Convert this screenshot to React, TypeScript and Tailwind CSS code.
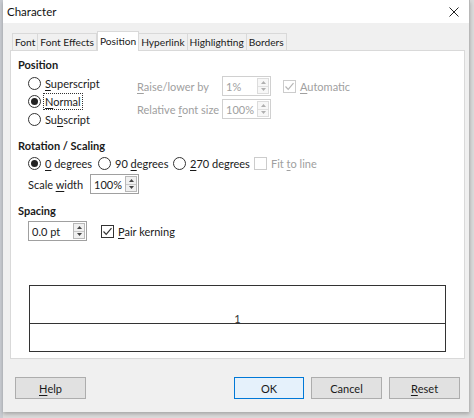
import type { ReactNode } from 'react';

const font = { fontFamily: 'Lato, "Noto Sans", sans-serif' };

function U({ children }: { children: ReactNode }) {
    return <span className="underline underline-offset-2">{children}</span>;
}

function Radio({ checked, children, focus }: { checked?: boolean; children: ReactNode; focus?: boolean }) {
    return (
        <div className="flex items-center gap-[3px] whitespace-nowrap">
            <span className="flex h-[13px] w-[13px] shrink-0 items-center justify-center rounded-full border border-[#333] bg-white">
                {checked && <span className="h-[7px] w-[7px] rounded-full bg-[#222]" />}
            </span>
            <span className={focus ? 'outline outline-1 outline-dotted outline-[#333] px-px' : 'px-px'}>{children}</span>
        </div>
    );
}

function Check({ checked, disabled, children }: { checked?: boolean; disabled?: boolean; children: ReactNode }) {
    const stroke = disabled ? '#b5b5b5' : '#333';
    return (
        <div className={`flex items-center gap-[3px] whitespace-nowrap ${disabled ? 'text-[#a0a0a0]' : ''}`}>
            <span className={`flex h-[13px] w-[13px] shrink-0 items-center justify-center border bg-white ${disabled ? 'border-[#cccccc]' : 'border-[#333]'}`}>
                {checked && (
                    <svg width="11" height="11" viewBox="0 0 11 11">
                        <path d="M1.5 5.5 L4.2 8.3 L9.5 2.2" fill="none" stroke={stroke} strokeWidth="1.2" />
                    </svg>
                )}
            </span>
            <span className="px-px">{children}</span>
        </div>
    );
}

function Spin({ value, width, disabled }: { value: string; width: string; disabled?: boolean }) {
    const arrow = disabled ? '#b0b0b0' : '#444';
    return (
        <div className={`flex h-[20px] ${width} shrink-0 border bg-white ${disabled ? 'border-[#d0d0d0] text-[#a0a0a0]' : 'border-[#a0a0a0]'}`}>
            <div className="flex flex-1 items-center pl-[3px] whitespace-nowrap">{value}</div>
            <div className={`m-px flex w-[12px] flex-col border ${disabled ? 'border-[#dcdcdc] bg-[#f7f7f7]' : 'border-[#b8b8b8] bg-[#f0f0f0]'}`}>
                <div className="flex flex-1 items-center justify-center">
                    <svg width="5" height="3" viewBox="0 0 5 3"><path d="M0 3 L2.5 0 L5 3 Z" fill={arrow} /></svg>
                </div>
                <div className={`h-px ${disabled ? 'bg-[#e0e0e0]' : 'bg-[#c8c8c8]'}`} />
                <div className="flex flex-1 items-center justify-center">
                    <svg width="5" height="3" viewBox="0 0 5 3"><path d="M0 0 L2.5 3 L5 0 Z" fill={arrow} /></svg>
                </div>
            </div>
        </div>
    );
}

function Tab({ label, active }: { label: string; active?: boolean }) {
    if (active) {
        return (
            <div className="relative z-10 -mb-px flex h-[20px] items-center border border-b-0 border-[#d9d9d9] bg-white px-[2px] whitespace-nowrap">
                {label}
            </div>
        );
    }
    return (
        <div className="mt-[2px] flex h-[17px] items-center border border-b-0 border-l-0 border-[#d9d9d9] bg-[#f0f0f0] px-[2px] whitespace-nowrap first:border-l">
            {label}
        </div>
    );
}

function Button({ children, primary, width = 'w-[71px]' }: { children: ReactNode; primary?: boolean; width?: string }) {
    return (
        <div
            className={`flex h-[22px] ${width} items-center justify-center border ${primary ? 'border-[#0078d7] bg-[#e5f1fb]' : 'border-[#adadad] bg-[#e1e1e1]'}`}
        >
            {children}
        </div>
    );
}

export default function App() {
    return (
        <div className="flex h-[418px] w-[474px] bg-[#dcdcdc] text-[11px] leading-[15px] text-[#1a1a1a]" style={font}>
            <div className="w-[3px] bg-[#c9ccd2]" />
            <div className="flex h-[412px] w-[467px] flex-col border-r border-[#b8b8b8] bg-[#f0f0f0] shadow-[0_2px_4px_rgba(0,0,0,0.25)]">
                {/* title bar */}
                <div className="flex h-[23px] items-center justify-between bg-white pl-[4px] pr-[10px] text-[11.5px] text-[#111]">
                    <span>Character</span>
                    <svg width="10" height="10" viewBox="0 0 10 10">
                        <path d="M0.5 0.5 L9.5 9.5 M9.5 0.5 L0.5 9.5" stroke="#222" strokeWidth="1" />
                    </svg>
                </div>

                {/* tabs */}
                <div className="mt-[8px] flex pl-[9px] text-[10.2px]">
                    <Tab label="Font" />
                    <Tab label="Font Effects" />
                    <Tab label="Position" active />
                    <Tab label="Hyperlink" />
                    <Tab label="Highlighting" />
                    <Tab label="Borders" />
                </div>

                {/* tab page */}
                <div className="ml-[7px] flex h-[309px] w-[455px] flex-col border border-[#d9d9d9] bg-white pl-[7px] pt-[6px]">
                    <div className="font-bold">Position</div>
                    <div className="flex">
                        <div className="mt-[2px] flex w-[119px] flex-col pl-[10px]">
                            <div className="flex h-[18px] items-center">
                                <Radio><U>S</U>uperscript</Radio>
                            </div>
                            <div className="flex h-[18px] items-center">
                                <Radio checked focus><U>N</U>ormal</Radio>
                            </div>
                            <div className="flex h-[18px] items-center">
                                <Radio>Su<U>b</U>script</Radio>
                            </div>
                        </div>
                        <div className="mt-[4px] flex flex-col gap-[3px] text-[#a0a0a0]">
                            <div className="flex h-[20px] items-center">
                                <span className="w-[85px] whitespace-nowrap"><U>R</U>aise/lower by</span>
                                <Spin value="1%" width="w-[49px]" disabled />
                                <span className="ml-[12px]">
                                    <Check checked disabled><U>A</U>utomatic</Check>
                                </span>
                            </div>
                            <div className="flex h-[20px] items-center">
                                <span className="w-[85px] whitespace-nowrap">Relative <U>f</U>ont size</span>
                                <Spin value="100%" width="w-[49px]" disabled />
                            </div>
                        </div>
                    </div>

                    <div className="mt-[10px] font-bold">Rotation / Scaling</div>
                    <div className="mt-px flex h-[18px] items-center pl-[10px]">
                        <div className="w-[70px]"><Radio checked><U>0</U> degrees</Radio></div>
                        <div className="w-[75px]"><Radio>90 <U>d</U>egrees</Radio></div>
                        <div className="w-[81px]"><Radio><U>2</U>70 degrees</Radio></div>
                        <Check disabled>Fit <U>t</U>o line</Check>
                    </div>
                    <div className="mt-[2px] flex h-[20px] items-center pl-[10px]">
                        <span className="w-[62px] whitespace-nowrap">Scale <U>w</U>idth</span>
                        <Spin value="100%" width="w-[49px]" />
                    </div>

                    <div className="mt-[9px] font-bold">Spacing</div>
                    <div className="mt-[3px] flex h-[20px] items-center pl-[10px]">
                        <Spin value="0.0 pt" width="w-[59px]" />
                        <span className="ml-[14px]">
                            <Check checked><U>P</U>air kerning</Check>
                        </span>
                    </div>

                    {/* preview */}
                    <div className="ml-[11px] mt-[44px] flex h-[67px] w-[417px] flex-col border border-[#333]">
                        <div className="flex h-[37px] items-end justify-center">
                            <span className="-mb-[2px] leading-[12px] text-[#333]">1</span>
                        </div>
                        <div className="h-px bg-[#333]" />
                    </div>
                </div>

                {/* buttons */}
                <div className="mt-[18px] flex items-center pl-[12px] pr-[9px]">
                    <Button><U>H</U>elp</Button>
                    <div className="flex-1" />
                    <div className="flex gap-[7px]">
                        <Button primary width="w-[70px]">OK</Button>
                        <Button>Cancel</Button>
                        <Button><U>R</U>eset</Button>
                    </div>
                </div>
            </div>
        </div>
    );
}
